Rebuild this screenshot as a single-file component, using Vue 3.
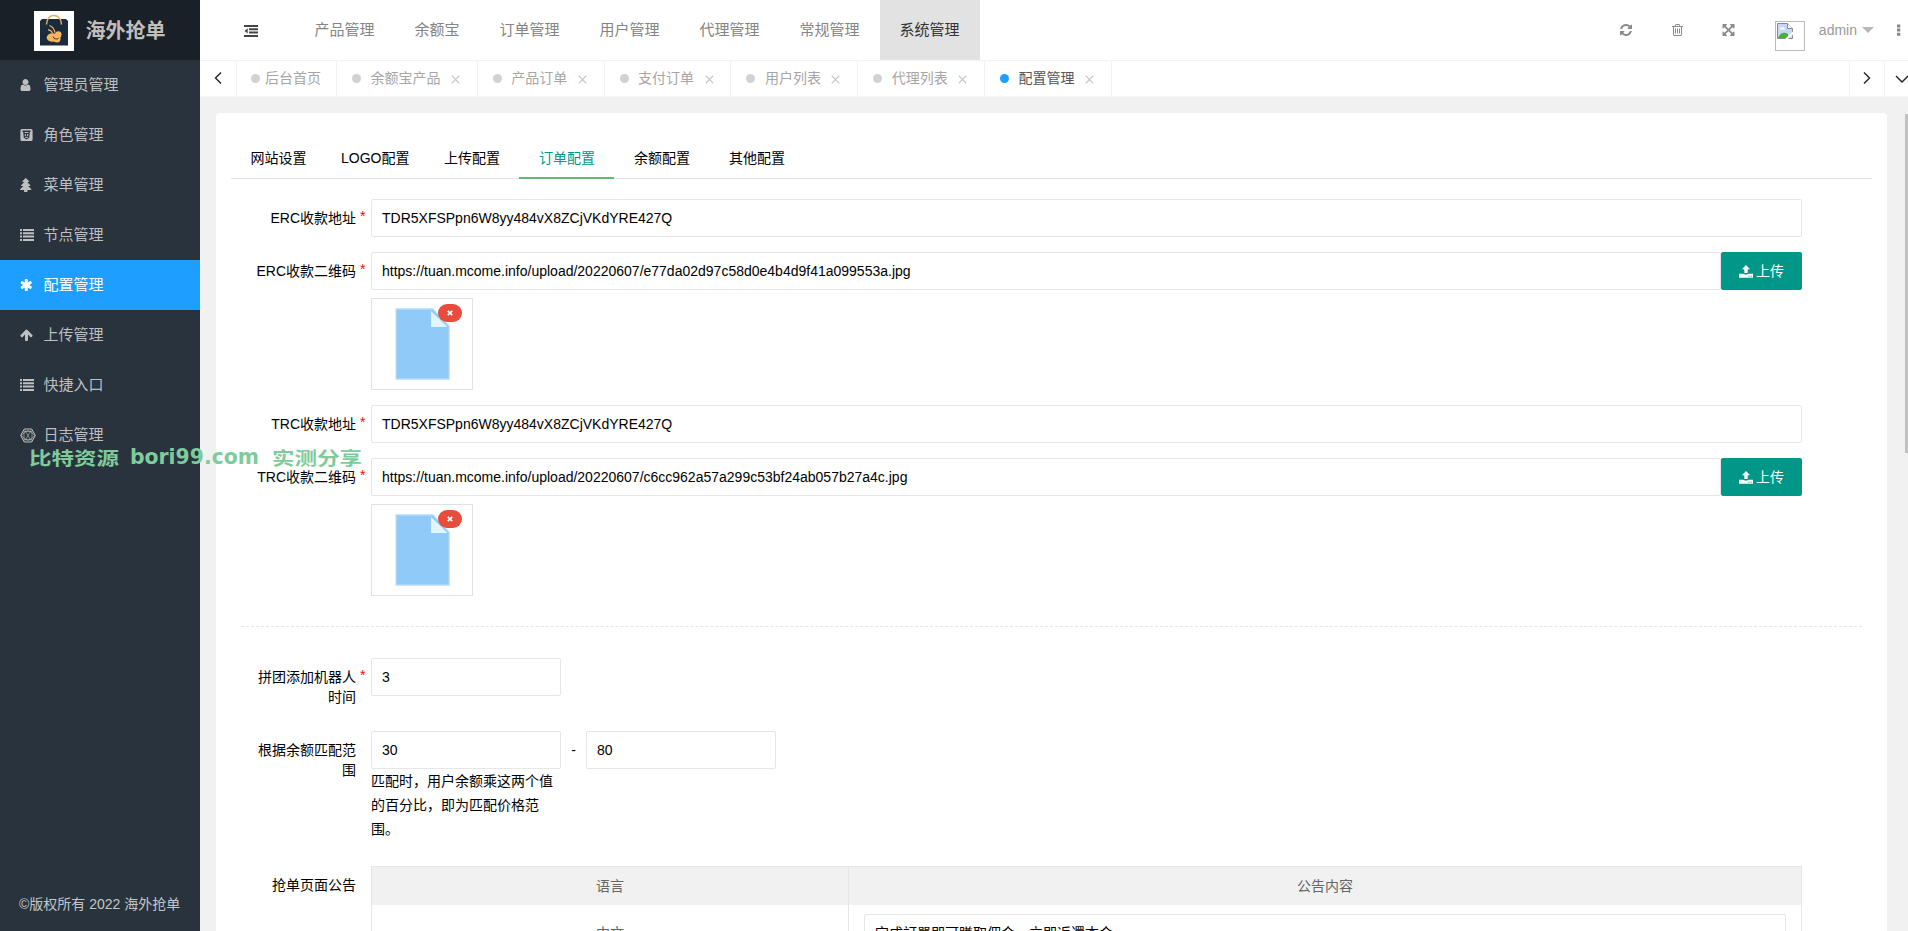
<script setup>
import { ref } from 'vue'

const FA = {
  user: { box: '0 0 1280 1792', d: 'M1280 1399q0 109-62.5 187t-150.5 78h-854q-88 0-150.5-78t-62.5-187q0-85 8.5-160.5t31.5-152 58.5-131 94-89 134.5-34.5q131 128 313 128t313-128q76 0 134.5 34.5t94 89 58.5 131 31.5 152 8.5 160.5zm-256-887q0 159-112.5 271.5t-271.5 112.5-271.5-112.5-112.5-271.5 112.5-271.5 271.5-112.5 271.5 112.5 112.5 271.5z' },
  tree: { box: '32 0 1536 1792', d: 'M1504 1472q0 26-19 45t-45 19h-462q1 17 6 87.5t5 108.5q0 25-18 42.5t-43 17.5h-320q-25 0-43-17.5t-18-42.5q0-38 5-108.5t6-87.5h-462q-26 0-45-19t-19-45 19-45l402-403h-229q-26 0-45-19t-19-45 19-45l402-403h-197q-26 0-45-19t-19-45 19-45l384-384q19-19 45-19t45 19l384 384q19 19 19 45t-19 45-45 19h-197l402 403q19 19 19 45t-19 45-45 19h-229l402 403q19 19 19 45z' },
  asterisk: { box: '0 -128 1664 1792', d: 'M1386 922q46 26 59.5 77.5t-12.5 97.5l-64 110q-26 46-77.5 59.5t-97.5-12.5l-266-153v307q0 52-38 90t-90 38h-128q-52 0-90-38t-38-90v-307l-266 153q-46 26-97.5 12.5t-77.5-59.5l-64-110q-26-46-12.5-97.5t59.5-77.5l266-154-266-154q-46-26-59.5-77.5t12.5-97.5l64-110q26-46 77.5-59.5t97.500 12.5l266 153v-307q0-52 38-90t90-38h128q52 0 90 38t38 90v307l266-153q46-26 97.5-12.5t77.5 59.5l64 110q26 46 12.5 97.5t-59.5 77.5l-266 154z' },
  arrow: { box: '64 0 1664 1792', d: 'M1611 971q0 51-37 90l-75 75q-38 38-91 38-54 0-90-38l-294-293v704q0 52-37.5 84.5t-90.5 32.5h-128q-53 0-90.5-32.5t-37.5-84.5v-704l-294 293q-36 38-90 38t-90-38l-75-75q-38-38-38-90 0-53 38-91l651-651q35-37 90-37 54 0 91 37l651 651q37 39 37 91z' },
  refresh: { box: '0 0 1664 1792', d: 'M1639 1056q0 5-1 7-64 268-268 434.5t-478 166.5q-146 0-282.5-55t-243.5-157l-129 129q-19 19-45 19t-45-19-19-45v-448q0-26 19-45t45-19h448q26 0 45 19t19 45-19 45l-137 137q71 66 161 102t187 36q134 0 250-65t186-179q11-17 53-117 8-23 30-23h192q13 0 22.5 9.5t9.5 22.5zm25-800v448q0 26-19 45t-45 19h-448q-26 0-45-19t-19-45 19-45l138-138q-148-137-349-137-134 0-250 65t-186 179q-11 17-53 117-8 23-30 23h-199q-13 0-22.5-9.5t-9.5-22.5v-7q65-268 270-434.5t480-166.5q146 0 284 55.5t245 156.5l130-129q19-19 45-19t45 19 19 45z' },
  trash: { box: '64 0 1664 1792', d: 'M704 736v576q0 14-9 23t-23 9h-64q-14 0-23-9t-9-23v-576q0-14 9-23t23-9h64q14 0 23 9t9 23zm256 0v576q0 14-9 23t-23 9h-64q-14 0-23-9t-9-23v-576q0-14 9-23t23-9h64q14 0 23 9t9 23zm256 0v576q0 14-9 23t-23 9h-64q-14 0-23-9t-9-23v-576q0-14 9-23t23-9h64q14 0 23 9t9 23zm128 724v-948h-896v948q0 22 7 40.5t14.5 27 10.5 8.5h832q3 0 10.5-8.5t14.5-27 7-40.5zm-672-1076h448l-48-117q-7-9-17-11h-317q-10 2-17 11zm928 32v64q0 14-9 23t-23 9h-96v948q0 83-47 143.5t-113 60.5h-832q-66 0-113-58.5t-47-141.5v-952h-96q-14 0-23-9t-9-23v-64q0-14 9-23t23-9h309l70-167q15-37 54-63t79-26h320q40 0 79 26t54 63l70 167h309q14 0 23 9t9 23z' },
  expand: { box: '64 0 1664 1792', d: 'M1411 541l-355 355 355 355 144-144q29-31 70-14 39 17 39 59v448q0 26-19 45t-45 19h-448q-42 0-59-40-17-39 14-69l144-144-355-355-355 355 144 144q31 30 14 69-17 40-59 40h-448q-26 0-45-19t-19-45v-448q0-42 40-59 39-17 69 14l144 144 355-355-355-355-144 144q-19 19-45 19-12 0-24-5-40-17-40-59v-448q0-26 19-45t45-19h448q42 0 59 40 17 39-14 69l-144 144 355 355 355-355-144-144q-31-30-14-69 17-40 59-40h448q26 0 45 19t19 45v448q0 42-39 59-13 5-25 5-26 0-45-19z' },
  list: { box: '0 0 14 14', d: 'M0 1h2v2H0zM3 1h11v2H3zM0 4.300h2v2H0zM3 4.300h11v2H3zM0 7.600h2v2H0zM3 7.600h11v2H3zM0 11h2v2H0zM3 11h11v2H3z' },
  badge: { box: '0 0 13 14', d: 'M2 1h9a1.600 1.600 0 0 1 1.600 1.600v8.800A1.600 1.600 0 0 1 11 13H2a1.600 1.600 0 0 1-1.600-1.600V2.600A1.600 1.600 0 0 1 2 1zM2.400 2.600v1.200h.8l.6 6L6.500 11.600 9.200 9.800l.6-6h.8V2.600zM4.600 4h3.800v1H4.600zM4.800 6h1.100v2.200H4.800zM7.100 6h1.100v2.200H7.100zM5.300 9h2.400v1H5.300z' }
}

const menu = ref([
  { name: '管理员管理', icon: 'user', w: 11 },
  { name: '角色管理', icon: 'badge', w: 13 },
  { name: '菜单管理', icon: 'tree', w: 12 },
  { name: '节点管理', icon: 'list', w: 14 },
  { name: '配置管理', icon: 'asterisk', w: 14, active: true },
  { name: '上传管理', icon: 'arrow', w: 14 },
  { name: '快捷入口', icon: 'list', w: 14 },
  { name: '日志管理', icon: 'hex', w: 15 }
])
const nav = ['产品管理', '余额宝', '订单管理', '用户管理', '代理管理', '常规管理', '系统管理']
const pages = ['余额宝产品', '产品订单', '支付订单', '用户列表', '代理列表', '配置管理']
const tabs = ['网站设置', 'LOGO配置', '上传配置', '订单配置', '余额配置', '其他配置']
const wallets = ref([
  { coin: 'ERC', address: 'TDR5XFSPpn6W8yy484vX8ZCjVKdYRE427Q', image: 'https://tuan.mcome.info/upload/20220607/e77da02d97c58d0e4b4d9f41a099553a.jpg' },
  { coin: 'TRC', address: 'TDR5XFSPpn6W8yy484vX8ZCjVKdYRE427Q', image: 'https://tuan.mcome.info/upload/20220607/c6cc962a57a299c53bf24ab057b27a4c.jpg' }
])
</script>

<template>
  <div class="app">
    <aside class="side">
      <div class="brand">
        <svg class="logo" viewBox="0 0 40 40">
          <rect width="40" height="40" fill="#fff" />
          <path d="M6 10l2-2h24l2 2v24.500H6z" fill="#1c2b3c" />
          <path d="M12.500 13.500C12.500 1.500 27.500 1.500 27.500 13.500" fill="none" stroke="#e5b065" stroke-width="1.500" />
          <ellipse cx="18.500" cy="26.500" rx="5.800" ry="4.300" fill="#f5b562" />
          <circle cx="24.300" cy="23.500" r="3.200" fill="#f5b562" />
          <circle cx="23" cy="27.800" r="3.600" fill="#f5b562" />
          <path d="M21 21.500C20 17.500 18.500 15.500 15.500 14.500M18.500 22C17.500 19.500 16 18.800 14 18.800" fill="none" stroke="#f5b562" stroke-width="1.200" />
          <path d="M19 25.500c1 2.500 3 3 5.500 2" fill="none" stroke="#1c2b3c" stroke-width=".9" />
        </svg>
        <span class="brand-name">海外抢单</span>
      </div>
      <div v-for="m in menu" :key="m.name" class="menu-item" :class="{ active: m.active }">
        <span class="menu-icon">
          <svg v-if="m.icon === 'hex'" width="16" height="15" viewBox="0 0 16 15" fill="none" stroke="currentColor">
            <path d="M4.300 1h7.400L15.300 7.500 11.700 14H4.300L.7 7.500z" stroke-width="1" />
            <path d="M4.500 1.500L11.500 13.500M11.500 1.500L4.500 13.500M1 7.500l7-5.500 7 5.500-7 5.500zM4 3.500h8v8H4z" stroke-width=".6" />
          </svg>
          <svg v-else :width="m.w" height="14" :viewBox="FA[m.icon].box"><path :d="FA[m.icon].d" fill="currentColor" fill-rule="evenodd" /></svg>
        </span>
        <span>{{ m.name }}</span>
      </div>
      <div class="copyright">©版权所有 2022 海外抢单</div>
    </aside>

    <div class="main">
      <header class="top">
        <div class="fold">
          <svg width="14" height="12" viewBox="0 0 14 12" fill="#444"><path d="M0 0h14v2H0zM5 3.300h9v2H5zM5 6.600h9v2H5zM0 10h14v2H0zM3.700 3.200v5.400L.6 5.900z" /></svg>
        </div>
        <div v-for="n in nav" :key="n" class="nav-item" :class="{ on: n === '系统管理' }">{{ n }}</div>
        <div class="tools">
          <span v-for="t in ['refresh', 'trash', 'expand']" :key="t" class="tool">
            <svg width="13" height="14" :viewBox="FA[t].box"><path :d="FA[t].d" fill="#8a8a8a" /></svg>
          </span>
          <span class="avatar">
            <svg width="16" height="16" viewBox="0 0 16 16">
              <path d="M.5.500h10l5 5v10H.5z" fill="#c3d9f7" stroke="#8a8a8a" />
              <path d="M3 6.500c-.8-1.600 1-2.600 2-1.800C6 3.300 8 4.300 7.700 6.500z" fill="#fff" />
              <path d="M1 15c2-5 6-6.500 10-4v4z" fill="#4caf32" />
              <path d="M10.500.500v5h5" fill="#fff" stroke="#8a8a8a" />
              <path d="M16 8.500L8 16h3l5-4.500z" fill="#fff" />
            </svg>
          </span>
          <span class="admin">admin</span>
          <span class="caret"></span>
          <svg class="dots" width="4" height="12" viewBox="0 0 4 12" fill="#888"><path d="M0 .500h3.300v3H0zM0 4.600h3.300v3H0zM0 8.700h3.300v3H0z" /></svg>
        </div>
      </header>

      <div class="pages">
        <div class="page-ctl left"><svg width="8" height="14" viewBox="0 0 8 14"><path d="M7 1.500L1.500 7 7 12.500" /></svg></div>
        <div class="page home"><i class="dot"></i><span class="page-text">后台首页</span></div>
        <div v-for="p in pages" :key="p" class="page" :class="{ on: p === '配置管理' }">
          <i class="dot"></i><span class="page-text page-name">{{ p }}</span>
          <svg class="x" width="9" height="9" viewBox="0 0 9 9"><path d="M.7.700l7.600 7.600M8.300.700L.7 8.300" /></svg>
        </div>
        <div class="page-ctl right"><svg width="8" height="14" viewBox="0 0 8 14"><path d="M1 1.500L6.500 7 1 12.500" /></svg></div>
        <div class="page-ctl down"><svg width="14" height="8" viewBox="0 0 14 8"><path d="M1 1l6 6 6-6" /></svg></div>
      </div>

      <div class="body">
        <div class="card">
          <div class="tabs">
            <div v-for="t in tabs" :key="t" class="tab" :class="{ on: t === '订单配置' }">{{ t }}</div>
          </div>

          <div class="form">
            <template v-for="w in wallets" :key="w.coin">
              <div class="row">
                <div class="label req">{{ w.coin }}收款地址</div>
                <div class="input wide">{{ w.address }}</div>
              </div>
              <div class="row upload-row">
                <div class="label req">{{ w.coin }}收款二维码</div>
                <div class="wide">
                  <div class="group">
                    <div class="input grow">{{ w.image }}</div>
                    <div class="btn">
                      <svg width="14" height="13" viewBox="0 0 14 13" fill="#fff"><path d="M7 0l4 4.300H8.700V8H5.300V4.300H3z" /><path fill-rule="evenodd" d="M0 8.800h4.300c.4 1 5 1 5.400 0H14V12.700H0zM9.500 10.800v1h1v-1zM11.700 10.800v1h1v-1z" /></svg>
                      <span>上传</span>
                    </div>
                  </div>
                  <div class="thumb">
                    <svg width="56" height="72" viewBox="0 0 56 72">
                      <path d="M1 .800h37L54.200 18v53.200H1z" fill="#90caf9" stroke="#bfe0fb" stroke-width="1.200" />
                      <path d="M36 3v16h16.500z" fill="#e1f5fe" />
                    </svg>
                    <span class="del"><svg width="6" height="6" viewBox="0 0 6 6"><path d="M.8.800l4.400 4.400M5.200.800L.8 5.200" stroke="#fff" stroke-width="1.700" /></svg></span>
                  </div>
                </div>
              </div>
            </template>

            <div class="dash"></div>

            <div class="row robot">
              <div class="label req">拼团添加机器人时间</div>
              <div class="input short">3</div>
            </div>
            <div class="row range">
              <div class="label">根据余额匹配范围</div>
              <div class="short-col">
                <div class="input short">30</div>
                <div class="hint">匹配时，用户余额乘这两个值的百分比，即为匹配价格范围。</div>
              </div>
              <div class="sep">-</div>
              <div class="input short">80</div>
            </div>
            <div class="row">
              <div class="label">抢单页面公告</div>
              <div class="table wide">
                <div class="th">语言</div>
                <div class="th">公告内容</div>
                <div class="td lang">中文</div>
                <div class="td"><div class="input grow">完成訂單即可賺取佣金，立即返還本金</div></div>
              </div>
            </div>
          </div>
        </div>
        <div class="thumb-bar"></div>
      </div>
    </div>

    <div class="watermark"><span class="wc">比特资源</span><span class="wl">bori99.com</span><span class="wc">实测分享</span></div>
  </div>
</template>

<style>
html, body { margin: 0; overflow: hidden; }
</style>

<style scoped>
* { box-sizing: border-box; }
.app {
  position: relative; display: flex; width: 1908px; height: 931px; overflow: hidden;
  font: 14px/20px "Liberation Sans", "Noto Sans CJK SC", sans-serif; color: #000; background: #f1f1f1;
}
svg { display: block; flex: none; }
.side { display: flex; flex-direction: column; width: 200px; flex: none; background: #28333e; color: #bfbfbf; }
.brand { display: flex; align-items: center; height: 60px; padding: 2px 0 0 34px; background: #192027; }
.logo { width: 40px; height: 40px; }
.brand-name { margin-left: 11.500px; font-size: 20px; font-weight: 700; color: #c1bebc; }
.menu-item { display: flex; align-items: center; height: 50px; padding-left: 20px; font-size: 15px; }
.menu-item.active { background: #1e9fff; color: #fff; }
.menu-icon { width: 23.500px; }
.copyright { margin-top: auto; padding: 0 0 17px 19px; line-height: 20px; white-space: nowrap; color: #c4c6c8; }

.main { display: flex; flex-direction: column; width: 1708px; flex: none; }
.top { display: flex; height: 60px; background: #fff; }
.fold { display: flex; align-items: center; width: 95px; padding: 1px 0 0 44px; }
.nav-item { padding: 0 20.500px 0 19.500px; line-height: 60px; font-size: 15px; color: #858585; }
.nav-item.on { background: #e2e2e2; color: #333; }
.tools { display: flex; align-items: center; margin-left: auto; padding-right: 7px; }
.tool { display: flex; margin-right: 38.500px; }
.avatar { width: 30px; height: 30px; margin: 12px 14px 0 1px; padding: 1px; border: 1px solid #bcbcbc; }
.admin { color: #999; }
.caret { margin: 0 23px 0 5px; border: 6px solid transparent; border-top-color: #b8b8b8; border-bottom: 0; }

.pages { display: flex; height: 37px; border-top: 1px solid #f2f2f2; border-bottom: 1px solid #f6f6f6; background: #fff; }
.pages path { fill: none; stroke: #222; stroke-width: 1.400; }
.page-ctl { display: flex; align-items: center; justify-content: center; border-left: 1px solid #f2f2f2; }
.left { width: 37px; padding-bottom: 1px; border-left: 0; border-right: 1px solid #f2f2f2; }
.right { width: 35px; margin-left: auto; padding-bottom: 1px; }
.down { width: 24px; padding-left: 10px; justify-content: flex-start; overflow: hidden; }
.page { display: flex; align-items: center; padding: 0 16.800px 0 15px; border-right: 1px solid #f2f2f2; color: #a6a6a6; }
.home { width: 100px; padding: 0 0 0 14px; }
.dot { width: 9px; height: 9px; border-radius: 50%; background: #d2d2d2; }
.home .dot { margin-right: 5px; }
.page-text { padding-bottom: 2px; }
.page-name { margin: 0 10.500px 0 9.500px; }
.page .x { margin-top: 2px; }
.page .x path { stroke: #c2c2c2; stroke-width: 1.100; }
.page.on { color: #555; }
.page.on .dot { background: #1e9fff; }

.body { position: relative; flex: 1; padding: 16px 21px 0 16px; min-height: 0; }
.card { height: 900px; padding: 25px 15px 0; border-radius: 4px; background: #fff; }
.tabs { display: flex; height: 41px; border-bottom: 1px solid #e2e2e2; }
.tab { min-width: 95px; height: 41px; padding: 0 15px; line-height: 40px; text-align: center; }
.tab.on { color: #009688; border-bottom: 2px solid #5fb878; }
.form { padding: 20px 10px 0; }
.row { display: flex; margin-bottom: 15px; }
.label { position: relative; flex: none; width: 130px; padding: 9px 15px 9px 12px; text-align: right; }
.req::after { content: "*"; position: absolute; right: 5.500px; top: 7px; color: #f00; }
.input { height: 38px; padding-left: 10px; border: 1px solid #e6e6e6; border-radius: 2px; line-height: 36px; background: #fff; white-space: nowrap; }
.wide { width: 1431px; flex: none; }
.grow { flex: 1; }
.group { display: flex; }
.btn { display: flex; align-items: center; justify-content: center; gap: 3px; width: 81px; height: 38px; border-radius: 2px; background: #009688; color: #fff; }
.thumb { position: relative; display: flex; width: 102px; height: 92px; margin-top: 8px; padding: 9px 0 0 22.500px; border: 1px solid #e2e2e2; }
.del { position: absolute; left: 66px; top: 5px; display: flex; align-items: center; justify-content: center; width: 24px; height: 18px; border-radius: 9px; background: #e74c3c; }
.dash { margin: 30px 0 31px; border-top: 1px dashed #e6e6e6; }
.robot { height: 58px; }
.short { width: 190px; }
.short-col { width: 190px; }
.hint { line-height: 24px; }
.range { margin-bottom: 25px; }
.sep { width: 25px; line-height: 38px; text-align: center; }
.table { display: grid; grid-template-columns: 477px 1fr; grid-template-rows: 38px 66px; border: 1px solid #e6e6e6; color: #666; }
.th { line-height: 39px; text-align: center; background: #f1f1f1; }
.th:nth-child(odd), .td:nth-child(odd) { border-right: 1px solid #e6e6e6; }
.td { display: flex; padding: 9px 15px; }
.td .input { color: #000; }
.lang { justify-content: center; line-height: 38px; }
.thumb-bar { position: absolute; right: 0; top: 17px; width: 3px; height: 339px; background: #c1c1c1; }

.watermark { position: absolute; left: 29px; top: 445px; display: flex; align-items: center; height: 24px; color: #7fcb9c; white-space: nowrap; }
.wc { width: 90px; font: 700 18px/24px "Noto Sans CJK SC", sans-serif; transform: scaleX(1.250); transform-origin: 0 50%; }
.wl { width: 130px; margin: 0 12px 0 11px; font: 700 21px/24px "DejaVu Sans", sans-serif; transform: scaleX(.97); transform-origin: 0 50%; }
</style>
